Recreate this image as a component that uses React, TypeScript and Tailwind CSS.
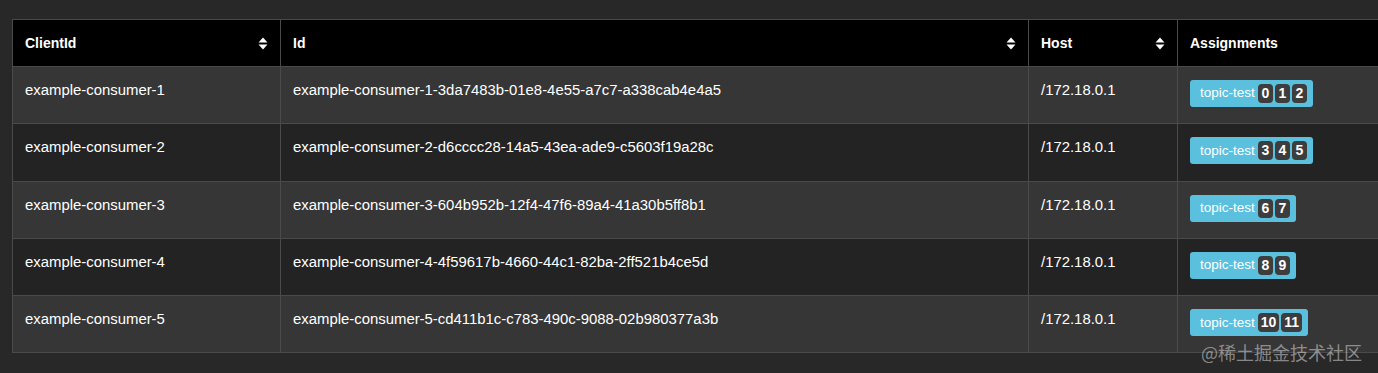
const consumers = [
  { clientId: "example-consumer-1", id: "example-consumer-1-3da7483b-01e8-4e55-a7c7-a338cab4e4a5", host: "/172.18.0.1", partitions: [0, 1, 2] },
  { clientId: "example-consumer-2", id: "example-consumer-2-d6cccc28-14a5-43ea-ade9-c5603f19a28c", host: "/172.18.0.1", partitions: [3, 4, 5] },
  { clientId: "example-consumer-3", id: "example-consumer-3-604b952b-12f4-47f6-89a4-41a30b5ff8b1", host: "/172.18.0.1", partitions: [6, 7] },
  { clientId: "example-consumer-4", id: "example-consumer-4-4f59617b-4660-44c1-82ba-2ff521b4ce5d", host: "/172.18.0.1", partitions: [8, 9] },
  { clientId: "example-consumer-5", id: "example-consumer-5-cd411b1c-c783-490c-9088-02b980377a3b", host: "/172.18.0.1", partitions: [10, 11] },
];

function SortIcon() {
  return (
    <svg width="10" height="13" viewBox="0 0 10 13" className="shrink-0">
      <path d="M5 0.5 L9.5 5.5 L0.5 5.5 Z" fill="white" />
      <path d="M5 12.5 L9.5 7.5 L0.5 7.5 Z" fill="white" />
    </svg>
  );
}

function HeaderCell({ label, sortable }: { label: string; sortable?: boolean }) {
  return (
    <th className="h-[47px] border border-[#4a4a4a] px-3 text-left align-middle text-[14px] font-bold">
      <div className="flex items-center justify-between">
        <span>{label}</span>
        {sortable && <SortIcon />}
      </div>
    </th>
  );
}

export default function App() {
  return (
    <div
      className="relative h-[373px] w-full overflow-hidden bg-[#282828] pl-[12px] pt-[19px] text-[14.9px] text-white"
      style={{ fontFamily: '"Liberation Sans", Arial, sans-serif' }}
    >
      <table className="w-[1440px] table-fixed border-collapse">
        <colgroup>
          <col className="w-[268px]" />
          <col className="w-[748px]" />
          <col className="w-[149px]" />
          <col />
        </colgroup>
        <thead className="bg-black">
          <tr>
            <HeaderCell label="ClientId" sortable />
            <HeaderCell label="Id" sortable />
            <HeaderCell label="Host" sortable />
            <HeaderCell label="Assignments" />
          </tr>
        </thead>
        <tbody>
          {consumers.map((c, i) => (
            <tr key={c.id} className={i % 2 === 0 ? "bg-[#363636]" : "bg-[#232323]"}>
              <td className="h-[57.3px] border border-[#4a4a4a] px-3 pt-[12px] align-top">{c.clientId}</td>
              <td className="border border-[#4a4a4a] px-3 pt-[12px] align-top">{c.id}</td>
              <td className="border border-[#4a4a4a] px-3 pt-[12px] align-top">{c.host}</td>
              <td className="border border-[#4a4a4a] px-3 pt-[13px] align-top">
                <span className="inline-flex h-[27px] items-center gap-[2px] rounded-[3px] bg-[#5bc0de] pl-[10px] pr-[6px] text-[13.5px]">
                  <span className="mr-[1px]">topic-test</span>
                  {c.partitions.map((p) => (
                    <span
                      key={p}
                      className="inline-flex h-[19px] min-w-[15px] items-center justify-center rounded-[4px] bg-[#3d3d3d] px-[3px] text-[14px] font-bold"
                    >
                      {p}
                    </span>
                  ))}
                </span>
              </td>
            </tr>
          ))}
        </tbody>
      </table>
      <div
        className="absolute bottom-[12px] right-[16px] text-[18px] leading-none text-white/45"
        style={{ fontFamily: '"Noto Sans CJK SC", sans-serif' }}
      >
        @稀土掘金技术社区
      </div>
    </div>
  );
}
